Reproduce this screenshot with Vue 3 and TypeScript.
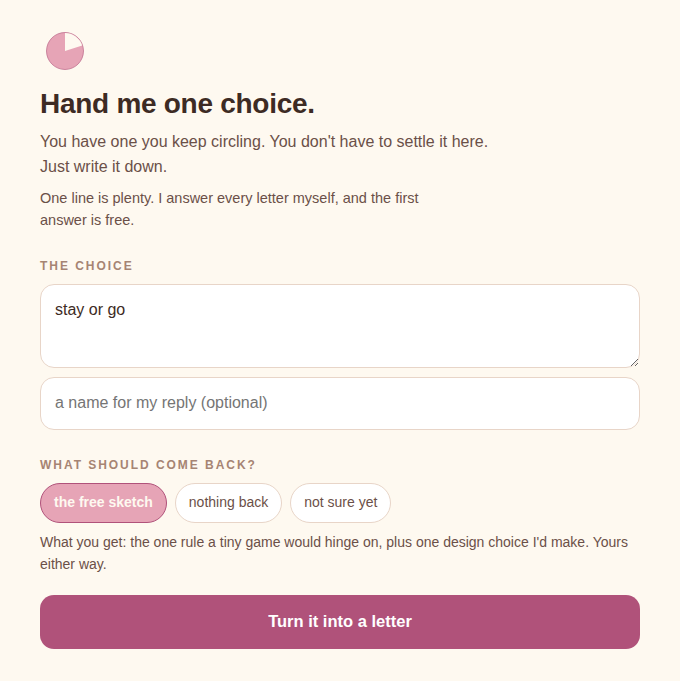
<script setup lang="ts">
import { ref } from 'vue'
const choice = ref('stay or go')
const name = ref('')
const options = ['the free sketch', 'nothing back', 'not sure yet']
const selected = ref('the free sketch')
</script>

<template>
  <main class="page">
    <svg class="logo" width="40" height="40" viewBox="0 0 40 40" aria-hidden="true">
      <circle cx="20" cy="20" r="18.5" fill="#e6a4b6" stroke="#b0527a" stroke-opacity="0.6" stroke-width="1" />
      <path d="M20 20 L20 2 A18 18 0 0 1 37.2 14.6 Z" fill="#fef9f0" />
    </svg>
    <h1 class="title">Hand me one choice.</h1>
    <p class="lead">You have one you keep circling. You don't have to settle it here.<br />Just write it down.</p>
    <p class="sub">One line is plenty. I answer every letter myself, and the first<br />answer is free.</p>

    <label class="label first" for="choice">THE CHOICE</label>
    <textarea id="choice" v-model="choice" class="field area"></textarea>
    <input v-model="name" class="field line" placeholder="a name for my reply (optional)" />

    <div class="label second">WHAT SHOULD COME BACK?</div>
    <div class="chips">
      <button
        v-for="o in options"
        :key="o"
        type="button"
        class="chip"
        :class="{ on: selected === o }"
        @click="selected = o"
      >{{ o }}</button>
    </div>
    <p class="note">What you get: the one rule a tiny game would hinge on, plus one design choice I'd make. Yours either way.</p>
    <button type="button" class="cta">Turn it into a letter</button>
  </main>
</template>

<style>
html, body { margin: 0; background: #fef9f0; }
</style>

<style scoped>
.page {
  box-sizing: border-box;
  width: 680px;
  height: 681px;
  padding: 31px 40px 0;
  background: #fef9f0;
  font-family: "Liberation Sans", Arial, sans-serif;
  color: #6b5048;
  display: flex;
  flex-direction: column;
  align-items: stretch;
}
.logo { display: block; margin-left: 5px; }
.title {
  margin: 16px 0 0;
  font-size: 28px;
  line-height: 34px;
  font-weight: 700;
  letter-spacing: -0.28px;
  color: #3d2b24;
}
.lead { margin: 8px 0 0; font-size: 16px; line-height: 25px; color: #6b5048; }
.sub { margin: 8px 0 0; font-size: 14.5px; line-height: 22px; color: #6b5048; }
.label {
  font-size: 12px;
  line-height: 14px;
  font-weight: 700;
  letter-spacing: 1.96px;
  color: #a68473;
}
.label.first { margin-top: 28px; }
.label.second { margin-top: 28px; }
.field {
  box-sizing: border-box;
  display: block;
  width: 600px;
  border: 1px solid #e8d5c8;
  border-radius: 14px;
  background: #fff;
  color: #3d2b24;
  font-family: inherit;
  font-size: 16px;
  outline: none;
}
.field::placeholder { color: #757575; opacity: 1; }
.area { margin-top: 11px; height: 84px; padding: 14px; line-height: 22px; resize: vertical; }
.line { margin-top: 9px; height: 53px; padding: 0 14px 1px; }
.chips { display: flex; gap: 8px; margin-top: 11px; }
.chip {
  box-sizing: border-box;
  height: 40px;
  padding: 0 13px 2px;
  border: 1px solid #e8d5c8;
  border-radius: 20px;
  background: #fff;
  color: #6b5048;
  font-family: inherit;
  font-size: 14px;
}
.chip.on {
  background: #e6a4b6;
  border-color: #b0527a;
  color: #fef9f0;
  font-weight: 700;
}
.note { margin: 8px 0 0; font-size: 14px; line-height: 22px; color: #6b5048; }
.cta {
  margin-top: 20px;
  height: 54px;
  padding: 0 0 2px;
  border: 0;
  border-radius: 14px;
  background: #b0527a;
  color: #fff;
  font-family: inherit;
  font-size: 16.5px;
  font-weight: 700;
}
</style>
